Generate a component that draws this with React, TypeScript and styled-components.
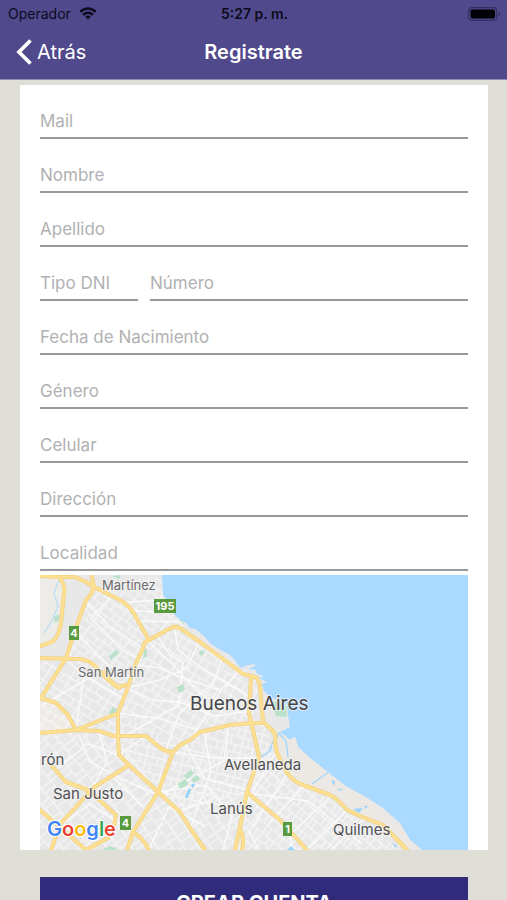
import React from "react";
import styled, { createGlobalStyle } from "styled-components";

const GlobalStyle = createGlobalStyle`
  *, *::before, *::after { box-sizing: border-box; }
  body {
    margin: 0;
    background: #dfdfd8;
    font-family: Inter, "Liberation Sans", sans-serif;
  }
`;

const Screen = styled.div`
  display: flex;
  flex-direction: column;
  height: 100vh;
  overflow: hidden;
`;

const Header = styled.header`
  flex: none;
  background: #50498c;
  border-bottom: 1px solid #8f8bb2;
`;

const StatusBar = styled.div`
  display: grid;
  grid-template-columns: 1fr auto 1fr;
  align-items: center;
  height: 27px;
  padding: 0 6px 0 8px;
  font-size: 14px;
  line-height: 20px;
  color: #0d0b1c;
`;

const Carrier = styled.div`
  display: flex;
  align-items: center;
  gap: 8px;
`;

const Clock = styled.time`
  font-weight: 600;
`;

const Battery = styled.svg`
  justify-self: end;
`;

const NavBar = styled.nav`
  display: grid;
  grid-template-columns: 1fr auto 1fr;
  align-items: center;
  height: 52px;
  padding: 0 16px 2px;
  color: #fff;
`;

const BackButton = styled.button`
  display: flex;
  align-items: center;
  justify-self: start;
  gap: 5px;
  padding: 0;
  border: 0;
  background: none;
  color: inherit;
  font: inherit;
  font-size: 20px;
  line-height: 28px;
  cursor: pointer;
`;

const Title = styled.h1`
  margin: 0;
  font-size: 20px;
  font-weight: 600;
  line-height: 28px;
`;

const Content = styled.main`
  flex: 1;
  min-height: 0;
  overflow-y: auto;
  scrollbar-width: none;
  padding: 5px 19px 20px 20px;
`;

const Card = styled.section`
  padding: 0 20px;
  background: #fff;
`;

const FieldRow = styled.div`
  display: flex;
  gap: 12px;
`;

const Field = styled.input<{ $width?: string }>`
  flex: ${(p) => (p.$width ? `0 0 ${p.$width}` : "1 1 0")};
  min-width: 0;
  height: 54px;
  padding: 19px 0 0;
  border: 0;
  border-bottom: 2px solid #98989a;
  border-radius: 0;
  outline: 0;
  background: transparent;
  color: #333;
  font-family: inherit;
  font-size: 17px;
  line-height: 24px;

  &::placeholder {
    color: #b1b1b3;
    opacity: 1;
  }
`;

const MapFigure = styled.figure`
  margin: 4px 0 0;
`;

const MapSvg = styled.svg`
  display: block;
  width: 100%;
  height: auto;
`;

const Actions = styled.div`
  padding: 27px 20px 0;
`;

const SubmitButton = styled.button`
  display: block;
  width: 100%;
  height: 52px;
  border: 0;
  background: #312b7b;
  color: #fff;
  font-family: inherit;
  font-size: 20px;
  font-weight: 700;
  line-height: 28px;
  cursor: pointer;
`;

type FieldSpec = { name: string; label: string; type?: string; width?: string };

const rows: FieldSpec[][] = [
  [{ name: "mail", label: "Mail", type: "email" }],
  [{ name: "nombre", label: "Nombre" }],
  [{ name: "apellido", label: "Apellido" }],
  [
    { name: "tipo", label: "Tipo DNI", width: "98px" },
    { name: "numero", label: "Número" },
  ],
  [{ name: "nacimiento", label: "Fecha de Nacimiento" }],
  [{ name: "genero", label: "Género" }],
  [{ name: "celular", label: "Celular", type: "tel" }],
  [{ name: "direccion", label: "Dirección" }],
  [{ name: "localidad", label: "Localidad" }],
];

const land =
  "M40 575H162L163 595L168 602L173 613L180 620L186 623L190 628L195 629L203 635L209 642L217 648L230 655L236 662L240 667L243 668L244 666L255 664L255 666L248 669L256 670L257 674L264 676L259 678L267 682L262 684L264 691L270 697L287 704L288 715L290 727L280 732L290 740L295 737L298 747L310 758L330 774L347 787L366 797L383 808L400 823L410 840L422 850H40Z";

const highways = [
  "M40 576L59 577L75 577L86 582L94 587L116 598Q128 604 133 612L149 640",
  "M91 573L94 587Q91 596 86 600L74 633L66 658L41 698L56 703L68 715L76 730",
  "M59 577Q66 586 64 593L61 623Q58 641 49 643L40 646",
  "M40 658L79 659Q90 660 96 667L108 680L119 687L125 685",
  "M104 672L113 684L119 688",
  "M149 640L169 629Q177 624 184 631L200 642L223 659L243 674L255 677Q259 679 260 687L263 722L272 730Q277 735 275 742L277 753L287 773Q294 782 303 785L330 795Q338 799 347 810L360 816L383 825L407 850",
  "M149 640Q144 641 143 648L136 663L128 687L118 713L118 737L119 755L129 765L158 792L180 812L190 828L205 850",
  "M40 733L76 730L99 731L114 736L146 736L159 747Q166 752 173 752L180 745L190 740L200 732L230 725L252 723L263 723",
  "M173 752L158 792L133 832L127 850",
  "M76 730L116 714",
  "M51 765L66 782L88 790L116 815L114 826",
  "M129 765L93 788L76 807L61 823L51 850",
  "M40 810L63 830L86 850L108 838",
  "M133 832Q143 838 149 850",
  "M251 678L249 713L253 730L259 757L247 792L240 827L235 850",
  "M240 829Q245 838 242 850",
  "M247 792L262 805L280 820L307 850",
];

const avenues =
  "M84 600L109 626L142 648M112 596L91 618L122 650L142 661M120 603L167 599M127 610L173 613M134 621L184 622M149 642L172 664L196 690L212 701M158 637L170 655L183 662L179 705L128 734M175 630L178 650L202 668L246 694M200 642L186 668L160 680L130 687M222 659L213 683L194 700L179 714L166 750M240 671L221 690L206 716L190 740M128 688L152 700L180 702L215 716L250 711M118 713L161 719L201 731M136 665L160 668L177 676L220 690M42 705L89 678L126 700M75 632L109 666M66 659L84 676L76 728M79 735L90 762L122 779L156 794M99 731L107 762L91 790M146 736L119 755L88 744L57 769M173 752L214 758L258 758M184 742L205 779L248 790M204 731L211 771L190 829M229 725L224 761L164 793M159 792L206 785L232 816L223 850M178 811L206 802L244 809M277 750L241 812M287 774L249 832L259 850M304 786L269 823M330 797L291 834L291 850M346 811L309 848M365 818L331 850M247 793L308 801L362 844M60 825L90 804L131 831M93 789L112 776L142 806M149 849L169 807L205 826";

const greens = [
  "M109 656L116 650L119 653L111 660Z",
  "M144 650L147 649L147 657L143 658Z",
  "M177 687L183 684L185 690L179 693Z",
  "M108 713L113 707L117 709L114 715Z",
  "M178 784L185 779L189 784L180 789Z",
  "M183 776L191 770L194 773L188 779Z",
  "M191 779L197 775L200 779L194 783Z",
  "M271 700L286 705L287 717L276 716Z",
  "M198 652L205 650L202 656Z",
  "M103 850Q108 844 116 848V850Z",
  "M112 576L121 575L119 579Z",
  "M54 617L59 614L59 620L55 623Z",
  "M179 620L184 619L184 624Z",
];

// Street grids: area polygon, direction in degrees and block size.
const streetGrids = [
  { id: "north", area: "M84 600L94 587L162 575L184 628L149 640L128 687L66 658Z", angle: 36, w: 20, h: 15 },
  { id: "belgrano", area: "M149 640L184 628L255 677L263 722L180 745L118 713Z", angle: 30, w: 21, h: 18 },
  { id: "west", area: "M40 660L128 687L118 737L40 733Z", angle: 32, w: 22, h: 16 },
  { id: "matanza", area: "M40 733L118 737L158 792L127 850H40Z", angle: 50, w: 18, h: 22 },
  { id: "center", area: "M118 713L180 745L263 722L277 753L247 792L180 812L119 755Z", angle: 14, w: 18, h: 16 },
  { id: "lanus", area: "M158 792L247 792L240 850H127Z", angle: 56, w: 18, h: 22 },
  { id: "quilmes", area: "M259 757L277 753L303 785L347 810L400 850H240L247 792Z", angle: 40, w: 15, h: 17 },
];

type LabelSpec = { text: string; x: number; y: number; size: number; color: string };

const labels: LabelSpec[] = [
  { text: "Martínez", x: 102, y: 590, size: 13, color: "#6b6b6d" },
  { text: "San Martín", x: 78, y: 677, size: 13, color: "#6b6b6d" },
  { text: "Buenos Aires", x: 190, y: 710, size: 19, color: "#444446" },
  { text: "rón", x: 41, y: 765, size: 15, color: "#505052" },
  { text: "Avellaneda", x: 224, y: 770, size: 15, color: "#505052" },
  { text: "San Justo", x: 53, y: 799, size: 15, color: "#505052" },
  { text: "Lanús", x: 210, y: 814, size: 15, color: "#505052" },
  { text: "Quilmes", x: 333, y: 835, size: 15, color: "#505052" },
];

const shields = [
  { text: "195", x: 154, y: 599, width: 22 },
  { text: "4", x: 69, y: 626, width: 10 },
  { text: "4", x: 120, y: 816, width: 11 },
  { text: "1", x: 283, y: 822, width: 9 },
];

const MapLabel = styled.text<{ $size: number; $color: string }>`
  font-size: ${(p) => p.$size}px;
  fill: ${(p) => p.$color};
  stroke: #f6f6f6;
  stroke-opacity: 0.7;
  stroke-width: 2px;
  stroke-linejoin: round;
  paint-order: stroke;
`;

const ShieldText = styled.text`
  font-size: 11px;
  font-weight: 700;
  fill: #fff;
  text-anchor: middle;
`;

const Wordmark = styled.text`
  font-size: 20px;
  font-weight: 600;
  stroke: #fff;
  stroke-width: 2px;
  stroke-linejoin: round;
  paint-order: stroke;
`;

function CityMap() {
  return (
    <MapSvg viewBox="40 575 428 275" role="img" aria-label="Mapa de Buenos Aires">
      <defs>
        <clipPath id="land">
          <path d={land} />
        </clipPath>
        {streetGrids.map((g) => (
          <pattern
            key={g.id}
            id={`streets-${g.id}`}
            width={g.w}
            height={g.h}
            patternUnits="userSpaceOnUse"
            patternTransform={`rotate(${g.angle})`}
          >
            <path
              d={`M0 1H${g.w}M1 0V${g.h}M1 ${g.h * 0.6}H${g.w}M${g.w * 0.4} 1V${g.h * 0.6}M${g.w * 0.7} ${g.h * 0.6}V${g.h}`}
              stroke="#f7f7f7"
              strokeWidth="1.2"
            />
          </pattern>
        ))}
      </defs>
      <rect x="40" y="575" width="428" height="275" fill="#aadaff" />
      <path d={land} fill="#e8e8e8" />
      <g clipPath="url(#land)" fill="none">
        <path d="M40 577L59 577L64 593L61 623L49 643L40 646Z" fill="#eeece8" />
        <path d="M40 698L56 703L68 715L76 730L40 733Z" fill="#eeebe5" />
        <path d="M277 735L295 735L425 850H405L383 825L347 810L330 795L303 785L287 773L277 753Z" fill="#ece9e4" />
        {streetGrids.map((g) => (
          <path key={g.id} d={g.area} fill={`url(#streets-${g.id})`} />
        ))}
        <path d={avenues} stroke="#fafafa" strokeWidth="1.5" strokeLinejoin="round" />
        {greens.map((d) => (
          <path key={d} d={d} fill="#b9e2c8" />
        ))}
        <path d="M59 580L54 593L58 606L52 621L44 633" stroke="#bfdff2" strokeWidth="1.5" />
        <path d="M194 784L192 787M190 789L186 798" stroke="#8ed0fa" strokeWidth="2.5" />
        <path d="M280 732L272 744L270 751L261 757M279 733L286 741L288 757M330 771L312 784" stroke="#a6d8fb" strokeWidth="1.5" />
        <path d="M331 780L335 781L334 786ZM338 788L343 790L340 791ZM353 809L363 808L359 813ZM364 806L368 806L366 809ZM393 843L397 846L395 848ZM287 850L291 846L295 850Z" fill="#9ad4fc" />
        {highways.map((d) => (
          <path key={d} d={d} stroke="#f3d27c" strokeWidth="4" strokeLinejoin="round" strokeLinecap="round" />
        ))}
        {highways.map((d) => (
          <path key={d} d={d} stroke="#fee094" strokeWidth="2.4" strokeLinejoin="round" strokeLinecap="round" />
        ))}
      </g>
      {labels.map((l) => (
        <MapLabel key={l.text} x={l.x} y={l.y} $size={l.size} $color={l.color}>
          {l.text}
        </MapLabel>
      ))}
      {shields.map((s) => (
        <g key={`${s.x}-${s.y}`}>
          <rect x={s.x} y={s.y} width={s.width} height="14" fill="#5a9a3e" />
          <ShieldText x={s.x + s.width / 2} y={s.y + 11}>
            {s.text}
          </ShieldText>
        </g>
      ))}
      <Wordmark x="47" y="836">
        <tspan fill="#4285f4">G</tspan>
        <tspan fill="#ea4335">o</tspan>
        <tspan fill="#fbbc05">o</tspan>
        <tspan fill="#4285f4">g</tspan>
        <tspan fill="#34a853">l</tspan>
        <tspan fill="#ea4335">e</tspan>
      </Wordmark>
    </MapSvg>
  );
}

export default function App() {
  return (
    <>
      <GlobalStyle />
      <Screen>
        <Header>
          <StatusBar>
            <Carrier>
              <span>Operador</span>
              <svg width="18" height="13" viewBox="0 0 18 13" fill="none" stroke="#0d0b1c" strokeWidth="2.4" aria-hidden="true">
                <path d="M1.2 4.8Q9-2 16.8 4.8" />
                <path d="M4.1 7.9Q9 3.6 13.9 7.9" />
                <path d="M9 12.5L6.2 9.7Q9 7.3 11.8 9.7Z" fill="#0d0b1c" stroke="none" />
              </svg>
            </Carrier>
            <Clock>5:27 p. m.</Clock>
            <Battery width="33" height="14" viewBox="0 0 33 14" aria-hidden="true">
              <rect x="0.7" y="0.7" width="28" height="12.6" rx="3.5" fill="none" stroke="#353064" strokeWidth="1.2" />
              <rect x="2.5" y="2.5" width="24.5" height="9" rx="1.8" fill="#020206" />
              <path d="M30.5 5V9Q32 8.4 32 7T30.5 5Z" fill="#353064" />
            </Battery>
          </StatusBar>
          <NavBar>
            <BackButton type="button">
              <svg width="16" height="26" viewBox="0 0 16 26" fill="none" stroke="#fff" strokeWidth="3.8" aria-hidden="true">
                <path d="M14.5 1.5L3 13L14.5 24.5" strokeLinejoin="miter" />
              </svg>
              Atrás
            </BackButton>
            <Title>Registrate</Title>
          </NavBar>
        </Header>
        <Content>
          <form onSubmit={(e) => e.preventDefault()}>
            <Card>
              {rows.map((row) => (
                <FieldRow key={row[0].name}>
                  {row.map((f) => (
                    <Field
                      key={f.name}
                      name={f.name}
                      type={f.type ?? "text"}
                      placeholder={f.label}
                      aria-label={f.label}
                      $width={f.width}
                    />
                  ))}
                </FieldRow>
              ))}
              <MapFigure>
                <CityMap />
              </MapFigure>
            </Card>
            <Actions>
              <SubmitButton type="submit">CREAR CUENTA</SubmitButton>
            </Actions>
          </form>
        </Content>
      </Screen>
    </>
  );
}
